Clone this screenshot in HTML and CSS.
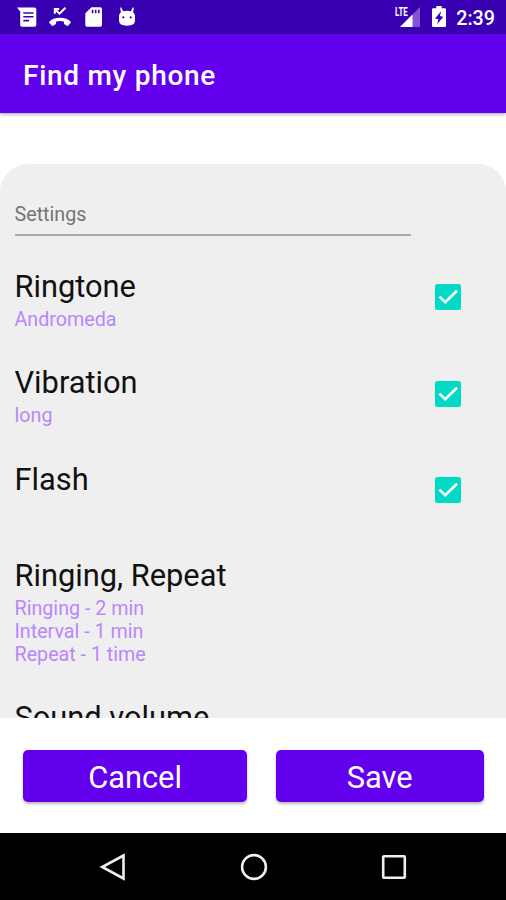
FILE: index.html
```html
<!DOCTYPE html>
<html lang="en">
<head>
<meta charset="utf-8">
<title>Find my phone</title>
<link rel="stylesheet" href="styles.css">
</head>
<body>
<div class="status">
  <div class="notices">
    <svg width="20" height="20" viewBox="0 0 20 20"><path fill="#fff" fill-rule="evenodd" d="M0 .5H17.5Q19.3.5 19.3 2.2V18Q19.3 19.7 17.5 19.7H5Q3.2 19.7 3.2 18V4.5ZM6.3 5.2V6.8H16.5V5.2ZM6.3 9V10.6H16.5V9ZM6.3 12.8V14.4H12V12.8Z"/></svg>
    <svg width="22" height="20" viewBox="0 0 22 20"><path fill="none" stroke="#fff" stroke-width="2" d="M5.8 6.8V2H10.2M6 2.2 10.5 6.7 16.5.8"/><path fill="#fff" d="M11 10.8C16 10.8 19.4 12.5 21.5 14.6Q22.2 15.3 21.5 16L19.3 18.6Q18.6 19.3 17.8 18.8L15.4 17.3Q14.9 17 14.9 16.3V14.6Q11 13.4 7.1 14.6V16.3Q7.1 17 6.6 17.3L4.2 18.8Q3.4 19.3 2.7 18.6L.5 16Q-.2 15.3.5 14.6C2.6 12.5 6 10.8 11 10.8Z"/></svg>
    <svg width="18" height="20" viewBox="0 0 18 20"><path fill="#fff" fill-rule="evenodd" d="M6.5.3H15.2Q17 .3 17 2V18Q17 19.7 15.2 19.7H2Q.3 19.7.3 18V6.3ZM6.8 2.8V6.2H8.4V2.8ZM9.9 2.8V6.2H11.5V2.8ZM13 2.8V6.2H14.6V2.8Z"/></svg>
    <svg width="18" height="20" viewBox="0 0 18 20"><path fill="#fff" fill-rule="evenodd" d="M3.2.2 5.1 4.2Q9 3.2 12.9 4.2L14.8.2 15.8.7 15.1 5.3Q17 6.7 17 9V13.5Q17 18.7 9 18.7T1 13.5V9Q1 6.7 2.9 5.3L2.2.7ZM4.2 10.3a1.1 1.1 0 1 0 2.2 0a1.1 1.1 0 1 0-2.2 0ZM11.6 10.3a1.1 1.1 0 1 0 2.2 0a1.1 1.1 0 1 0-2.2 0Z"/></svg>
  </div>
  <div class="system">
    <div class="signal">
      <svg width="20" height="20" viewBox="0 0 20 20"><path fill="#8055ce" d="M20 0V20H0Z"/><path fill="#fff" d="M12.5 7.5V20H0Z"/></svg>
      <span class="lte">LTE</span>
    </div>
    <svg class="battery" width="14" height="21" viewBox="0 0 14 21"><path fill="#fff" fill-rule="evenodd" d="M4.3 0H9.7V2.3H12.7Q14 2.3 14 3.6V19.7Q14 21 12.7 21H1.3Q0 21 0 19.7V3.6Q0 2.3 1.3 2.3H4.3ZM9.2 5.2 3 12.5 6.4 13.3 5.2 18.2 11.3 10.8 7.9 10Z"/></svg>
    <span class="clock">2:39</span>
  </div>
</div>
<header class="appbar">Find my phone</header>
<main class="panel">
  <div class="section">Settings</div>
  <div class="row">
    <div class="label"><div class="name">Ringtone</div><div class="summary">Andromeda</div></div>
    <svg class="check" viewBox="0 0 26 26"><rect width="26" height="26" rx="2.5"/><path d="M4.5 12.6 10.2 18.2 22 6.7"/></svg>
  </div>
  <div class="row">
    <div class="label"><div class="name">Vibration</div><div class="summary">long</div></div>
    <svg class="check" viewBox="0 0 26 26"><rect width="26" height="26" rx="2.5"/><path d="M4.5 12.6 10.2 18.2 22 6.7"/></svg>
  </div>
  <div class="row">
    <div class="label"><div class="name">Flash</div></div>
    <svg class="check" viewBox="0 0 26 26"><rect width="26" height="26" rx="2.5"/><path d="M4.5 12.6 10.2 18.2 22 6.7"/></svg>
  </div>
  <div class="row tall">
    <div class="label"><div class="name">Ringing, Repeat</div><div class="summary">Ringing - 2 min<br>Interval - 1 min<br>Repeat - 1 time</div></div>
  </div>
  <div class="row">
    <div class="label"><div class="name">Sound volume</div></div>
  </div>
</main>
<div class="actions">
  <button class="btn cancel">Cancel</button>
  <button class="btn save">Save</button>
</div>
<nav class="navbar">
  <svg width="28" height="28" viewBox="0 0 28 28"><path d="M24.5 2.5V25.5L3.2 14Z"/></svg>
  <svg width="28" height="28" viewBox="0 0 28 28"><circle cx="14" cy="14" r="11.9"/></svg>
  <svg width="28" height="28" viewBox="0 0 28 28"><rect x="3.2" y="3.2" width="21.6" height="21.6" rx=".8"/></svg>
</nav>
</body>
</html>
```
FILE: styles.css
```css
* { box-sizing: border-box; }
body {
  margin: 0;
  height: 900px;
  display: flex;
  flex-direction: column;
  overflow: hidden;
  background: #fff;
  font-family: Roboto, sans-serif;
}
svg { display: block; flex: none; }
.status {
  height: 34px;
  flex: none;
  display: flex;
  justify-content: space-between;
  padding: 6px 11px 0 17px;
  background: #3900b2;
}
.notices { display: flex; padding-top: 1px; }
.notices svg { margin-right: 12px; }
.notices svg:nth-child(2) { margin-right: 14px; }
.notices svg:nth-child(3) { margin-right: 15px; }
.system { display: flex; }
.signal { position: relative; padding-top: 1px; }
.lte {
  position: absolute;
  left: -5px;
  top: 0;
  font-size: 12px;
  line-height: 13px;
  font-weight: 700;
  color: #fff;
  transform: scaleX(.66);
  transform-origin: 0 0;
}
.battery { margin-left: 12px; }
.clock {
  margin-left: 10px;
  font-size: 19.7px;
  line-height: 25px;
  font-weight: 500;
  color: #fff;
}
.appbar {
  height: 78.5px;
  flex: none;
  padding-left: 23px;
  line-height: 83px;
  font-size: 28px;
  font-weight: 500;
  letter-spacing: .72px;
  color: #fff;
  background: #6200ee;
  box-shadow: 0 1px 4px rgba(0, 0, 0, .4);
}
.panel {
  height: 554px;
  flex: none;
  margin-top: 51.5px;
  padding: 36px 45.5px 0 14.5px;
  overflow: hidden;
  background: #efefef;
  border-radius: 28px 28px 0 0;
}
.section {
  width: 396.5px;
  height: 36px;
  margin-bottom: 32px;
  border-bottom: 2px solid #aaa;
  font-size: 19.7px;
  line-height: 30px;
  color: #757575;
}
.row { height: 96.3px; display: flex; justify-content: space-between; }
.tall { height: 142px; }
.name { font-size: 30.8px; line-height: 37px; color: #111; }
.summary { margin-top: 2.8px; font-size: 19.7px; line-height: 23.2px; color: #bb86fc; }
.check { width: 26px; height: 26px; margin-top: 16.3px; }
.check rect { fill: #03dac5; }
.check path { fill: none; stroke: #fff; stroke-width: 2.7; }
.actions { flex: 1; display: flex; padding: 32px 22px 0 23px; }
.btn {
  height: 52px;
  padding: 3px 0 0;
  border: 0;
  border-radius: 5px;
  background: #6200ee;
  color: #fff;
  font-family: inherit;
  font-size: 30.8px;
  line-height: 40px;
  box-shadow: 0 2px 3px rgba(0, 0, 0, .28);
}
.cancel { width: 224px; margin-right: 28.5px; }
.save { flex: 1; }
.navbar {
  height: 67px;
  flex: none;
  display: flex;
  justify-content: space-between;
  padding: 20px 98px 0 99px;
  background: #000;
}
.navbar svg { fill: none; stroke: #eee; stroke-width: 2.6; }
```
